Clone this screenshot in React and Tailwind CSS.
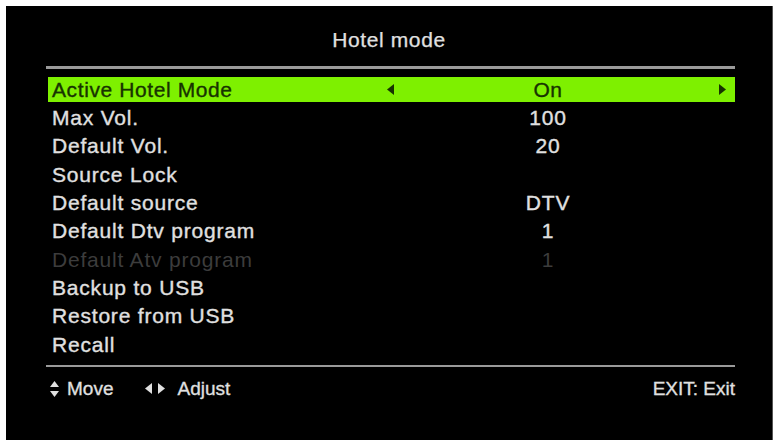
import React from "react";

const FONT = { fontFamily: '"Liberation Sans", Arial, sans-serif' };

function TriL({ className = "" }) {
  return (
    <svg width="7" height="11" viewBox="0 0 7 11" className={className}>
      <polygon points="7,0 7,11 0,5.5" fill="currentColor" />
    </svg>
  );
}
function TriR({ className = "" }) {
  return (
    <svg width="7" height="11" viewBox="0 0 7 11" className={className}>
      <polygon points="0,0 0,11 7,5.5" fill="currentColor" />
    </svg>
  );
}
function UpDown() {
  return (
    <svg width="9" height="16" viewBox="0 0 9 16">
      <polygon points="4.5,0 9,6 0,6" fill="currentColor" />
      <polygon points="0,10 9,10 4.5,16" fill="currentColor" />
    </svg>
  );
}

const rows = [
  ["Max Vol.", "100"],
  ["Default Vol.", "20"],
  ["Source Lock", ""],
  ["Default source", "DTV"],
  ["Default Dtv program", "1"],
  ["Default Atv program", "1", true],
  ["Backup to USB", ""],
  ["Restore from USB", ""],
  ["Recall", ""],
];

export default function App() {
  return (
    <div className="w-[773px] h-[440px] bg-white pt-[6px] pl-[6px] overflow-hidden">
      <div
        className="w-full h-full bg-black text-[#e0e0e0] border-r border-[#555]"
        style={FONT}
      >
        <div className="pt-[22px] text-center text-[21px] leading-[24px] tracking-[0.6px] [-webkit-text-stroke:0.25px_#e0e0e0]">
          Hotel mode
        </div>
        <div className="mt-[14px] ml-[40px] w-[689px] h-[3px] bg-[#9a9a9a]" />

        <div className="mt-[8px] ml-[42px] w-[687px] h-[25px] bg-[#7ef000] text-[#173300] flex items-center text-[21px] leading-[24px] tracking-[0.6px] [-webkit-text-stroke:0.35px_#173300]">
          <div className="w-[320px] pl-[4px]">Active Hotel Mode</div>
          <div className="w-[44px] flex justify-center">
            <TriL />
          </div>
          <div className="w-[272px] text-center">On</div>
          <div className="flex-1 flex justify-end pr-[9px]">
            <TriR />
          </div>
        </div>

        <div className="mt-[2px] ml-[42px] w-[687px]">
          {rows.map(([label, value, dim]) => (
            <div
              key={label}
              className={
                "h-[28.3px] flex items-center text-[21px] leading-[24px] tracking-[0.8px] " +
                (dim
                  ? "text-[#3c3c3c]"
                  : "[-webkit-text-stroke:0.35px_#e0e0e0]")
              }
            >
              <div className="w-[320px] pl-[4px]">{label}</div>
              <div className="w-[44px]" />
              <div className="w-[272px] text-center">{value}</div>
            </div>
          ))}
        </div>

        <div className="mt-[6px] ml-[40px] w-[689px] h-[2px] bg-[#9a9a9a]" />

        <div className="mt-[10px] ml-[44px] w-[685px] flex items-center text-[19px] leading-[24px] [-webkit-text-stroke:0.3px_#e0e0e0]">
          <UpDown />
          <span className="ml-[8px]">Move</span>
          <span className="ml-[32px] flex items-center gap-[6px]">
            <TriL />
            <TriR />
          </span>
          <span className="ml-[12px]">Adjust</span>
          <span className="ml-auto">EXIT: Exit</span>
        </div>
      </div>
    </div>
  );
}
